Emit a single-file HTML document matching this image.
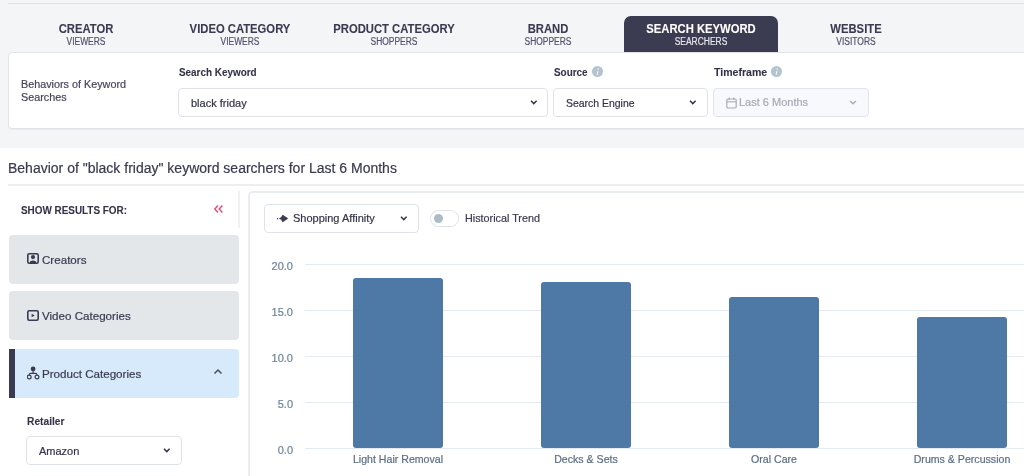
<!DOCTYPE html>
<html><head><meta charset="utf-8">
<style>
*{box-sizing:border-box;margin:0;padding:0}
html,body{width:1024px;height:476px;overflow:hidden;background:#f4f5f7;font-family:"Liberation Sans",sans-serif;color:#3a3a50;-webkit-text-stroke:0.2px currentColor}
.abs{position:absolute}
.topline{position:absolute;left:8px;top:3px;width:1016px;height:1px;background:#dfe2e6}
.tab{position:absolute;top:16px;width:154px;height:36px;text-align:center;color:#3a3a50}
.tab .t{-webkit-text-stroke:0.1px currentColor;position:absolute;left:0;right:0;top:6px;font-size:12.8px;font-weight:700;line-height:14px;white-space:nowrap;transform:scaleX(0.88)}
.tab .s{position:absolute;left:0;right:0;top:20px;font-size:10px;line-height:11px;color:#52526a;white-space:nowrap;transform:scaleX(0.845)}
.tab.active{background:#3b3b51;border-radius:7px 7px 0 0;color:#fff}
.tab.active .s{color:#e6e6ee}
.card{position:absolute;left:8px;top:52px;width:1030px;height:77px;background:#fff;border:1px solid #e1e5ea;border-radius:4px;box-shadow:0 1px 0 #e9ecf0}
.lbl{-webkit-text-stroke:0.1px currentColor;position:absolute;font-size:11px;font-weight:700;color:#33334a;white-space:nowrap}
.inp{position:absolute;height:29px;background:#fff;border:1px solid #dfe3e8;border-radius:4px;font-size:11px;color:#33334a}
.inp span{position:absolute;left:12px;top:8px;white-space:nowrap}
.chev{position:absolute;width:10px;height:7px}
.side{left:9px;width:230px;height:49px;background:#e3e7ea;border-radius:4px;font-size:11.6px;color:#3a3a50}
.side span{position:absolute;top:18px;white-space:nowrap}
.side.act{background:#d7eafc;border-left:6px solid #3a3a51;border-radius:0 4px 4px 0}
.side.act span{left:27px!important}
.side.act svg{margin-left:-6px}
.ylab{font-size:11px;line-height:14px;color:#6d8599;text-align:right}
.bar{width:90px;background:#4e78a6;border-radius:3px}
.xlab{font-size:10.6px;line-height:13px;color:#5b6e84;text-align:center;white-space:nowrap}
.main{position:absolute;left:0;top:148px;width:1024px;height:328px;background:#fff}
body{will-change:transform}</style></head>
<body>
<div class="topline"></div>

<div class="tab" style="left:8.5px"><div class="t">CREATOR</div><div class="s">VIEWERS</div></div>
<div class="tab" style="left:162.5px"><div class="t">VIDEO CATEGORY</div><div class="s">VIEWERS</div></div>
<div class="tab" style="left:316.5px"><div class="t">PRODUCT CATEGORY</div><div class="s">SHOPPERS</div></div>
<div class="tab" style="left:470.5px"><div class="t">BRAND</div><div class="s">SHOPPERS</div></div>
<div class="tab active" style="left:624px"><div class="t">SEARCH KEYWORD</div><div class="s">SEARCHERS</div></div>
<div class="tab" style="left:778.5px"><div class="t">WEBSITE</div><div class="s">VISITORS</div></div>

<div class="card">
  <div class="abs" style="left:12px;top:25px;font-size:10.8px;line-height:12.8px;color:#46465a;width:140px">Behaviors of Keyword<br>Searches</div>
  <div class="lbl" style="left:170px;top:13px;transform:scaleX(0.9);transform-origin:left">Search Keyword</div>
  <div class="inp" style="left:169px;top:35px;width:370px"><span>black friday</span>
    <svg class="chev" style="left:350px;top:10px" viewBox="0 0 10 7"><path d="M2 1.8 L4.8 4.6 L7.6 1.8" fill="none" stroke="#33334a" stroke-width="1.5"/></svg></div>
  <div class="lbl" style="left:545px;top:13px;transform:scaleX(0.9);transform-origin:left">Source</div>
  <svg class="abs" style="left:583px;top:13.2px" width="11" height="11" viewBox="0 0 11 11"><circle cx="5.5" cy="5.5" r="5.5" fill="#b5c3ce"/><path d="M5.85 5.4 L5.25 8.4" stroke="#f4f7f9" stroke-width="1.1" stroke-linecap="round"/><circle cx="6.2" cy="2.9" r="0.75" fill="#f4f7f9"/></svg>
  <div class="inp" style="left:544px;top:35px;width:155px"><span style="transform:scaleX(0.95);transform-origin:left">Search Engine</span>
    <svg class="chev" style="left:134px;top:10px" viewBox="0 0 10 7"><path d="M2 1.8 L4.8 4.6 L7.6 1.8" fill="none" stroke="#33334a" stroke-width="1.5"/></svg></div>
  <div class="lbl" style="left:705px;top:13px;transform:scaleX(0.96);transform-origin:left">Timeframe</div>
  <svg class="abs" style="left:762px;top:13.2px" width="11" height="11" viewBox="0 0 11 11"><circle cx="5.5" cy="5.5" r="5.5" fill="#b5c3ce"/><path d="M5.85 5.4 L5.25 8.4" stroke="#f4f7f9" stroke-width="1.1" stroke-linecap="round"/><circle cx="6.2" cy="2.9" r="0.75" fill="#f4f7f9"/></svg>
  <div class="inp" style="left:704px;top:35px;width:156px;background:#f7f9fc;border-color:#e0e5eb;color:#a6abb2">
    <svg class="abs" style="left:12px;top:7.5px" width="11" height="12" viewBox="0 0 11 12"><rect x="0.8" y="2" width="9.4" height="9" rx="1.2" fill="none" stroke="#a8adb4" stroke-width="1.2"/><line x1="0.8" y1="4.8" x2="10.2" y2="4.8" stroke="#a8adb4" stroke-width="1.1"/><line x1="3.2" y1="0.5" x2="3.2" y2="3" stroke="#a8adb4" stroke-width="1.2"/><line x1="7.8" y1="0.5" x2="7.8" y2="3" stroke="#a8adb4" stroke-width="1.2"/></svg>
    <span style="left:25px;top:7px">Last 6 Months</span>
    <svg class="chev" style="left:134px;top:10px" viewBox="0 0 10 7"><path d="M2 2 L5 4.8 L8 2" fill="none" stroke="#a8adb4" stroke-width="1.3"/></svg></div>
</div>

<div class="main">
  <div class="abs" style="left:8px;top:12px;font-size:14px;line-height:16px;color:#3a3a50;white-space:nowrap">Behavior of "black friday" keyword searchers for Last 6 Months</div>
  <div class="abs" style="left:8px;top:36px;width:1016px;height:2px;background:#eceef0"></div>
  <!-- sidebar -->
  <div class="lbl" style="left:21px;top:56px;transform:scaleX(0.9);transform-origin:left;color:#33334a">SHOW RESULTS FOR:</div>
  <svg class="abs" style="left:213px;top:56px" width="11" height="10" viewBox="0 0 11 10"><path d="M5 1.6 L1.8 5 L5 8.4 M9.4 1.6 L6.2 5 L9.4 8.4" fill="none" stroke="#e84a7c" stroke-width="1.4"/></svg>
  <div class="abs" style="left:238px;top:43px;width:2px;height:37px;background:#eef0f2"></div>
  <div class="abs side" style="top:87px"><svg class="abs" style="left:18px;top:18px" width="12" height="11" viewBox="0 0 12 11"><rect x="0.8" y="0.8" width="10.4" height="9.4" rx="1.4" fill="none" stroke="#3a3a50" stroke-width="1.6"/><circle cx="6" cy="4.1" r="2.1" fill="#3a3a50"/><path d="M2.6 10.2 L3.2 8.3 Q6 6.6 8.8 8.3 L9.4 10.2 Z" fill="#3a3a50"/></svg><span style="left:33px">Creators</span></div>
  <div class="abs side" style="top:143px"><svg class="abs" style="left:18px;top:18.5px" width="12" height="11" viewBox="0 0 12 11"><rect x="0.8" y="0.8" width="10.4" height="9.4" rx="1.4" fill="none" stroke="#3a3a50" stroke-width="1.6"/><path d="M4.6 3.7 L7.7 5.5 L4.6 7.3Z" fill="#3a3a50"/></svg><span style="left:33px">Video Categories</span></div>
  <div class="abs side act" style="top:200.5px"><svg class="abs" style="left:17.5px;top:17px" width="14" height="14" viewBox="0 0 14 14"><circle cx="6.1" cy="2.9" r="2.4" fill="#3a3a50"/><path d="M6.1 5 V7.2 M2.2 9.2 Q2.2 7.4 3.8 7.4 H8.4 Q10 7.4 10 9.2" stroke="#3a3a50" stroke-width="1.1" fill="none"/><circle cx="2.2" cy="11" r="1.9" fill="none" stroke="#3a3a50" stroke-width="1.2"/><circle cx="10" cy="11" r="1.9" fill="none" stroke="#3a3a50" stroke-width="1.2"/></svg><span style="left:33px">Product Categories</span>
    <svg class="abs" style="left:204px;top:19.2px" width="10" height="7" viewBox="0 0 10 7"><path d="M1.5 5.5 L5 2 L8.5 5.5" fill="none" stroke="#4b4e5c" stroke-width="1.5"/></svg></div>
  <div class="lbl" style="left:27px;top:266.5px;transform:scaleX(0.93);transform-origin:left">Retailer</div>
  <div class="inp" style="left:26px;top:288px;width:156px;height:29px"><span>Amazon</span>
    <svg class="chev" style="left:135px;top:10px" viewBox="0 0 10 7"><path d="M2 1.8 L4.8 4.6 L7.6 1.8" fill="none" stroke="#33334a" stroke-width="1.5"/></svg></div>
  <!-- chart card -->
  <div class="abs" style="left:248px;top:43px;width:800px;height:300px;border:2px solid #e9edf0;border-radius:5px;background:#fff">
    <div class="inp" style="left:14px;top:11px;width:155px;height:29px">
      <svg class="abs" style="left:11px;top:9px" width="13" height="9" viewBox="0 0 13 9"><circle cx="1.5" cy="4.8" r="0.7" fill="#3a3a50"/><path d="M3.4 4.6 Q5.6 4.3 6.7 1.1 L11.8 4.5 L6.7 7.9 Q5.6 4.9 3.4 4.6 Z" fill="#3a3a50" stroke="#3a3a50" stroke-width="0.6" stroke-linejoin="round"/></svg>
      <span style="left:28px;top:7px">Shopping Affinity</span>
      <svg class="chev" style="left:134px;top:10px" viewBox="0 0 10 7"><path d="M2 1.8 L4.8 4.6 L7.6 1.8" fill="none" stroke="#33334a" stroke-width="1.5"/></svg></div>
    <div class="abs" style="left:180px;top:17px;width:29px;height:17px;border:1px solid #dfe3e8;border-radius:8.5px;background:#fff"><div class="abs" style="left:3px;top:3px;width:9px;height:9px;border-radius:50%;background:#adbbc6"></div></div>
    <div class="abs" style="left:215px;top:19px;font-size:11px;color:#3a3a50;white-space:nowrap;transform:scaleX(0.98);transform-origin:left">Historical Trend</div>
  </div>
</div>
<div id="chart">
<div class="abs" style="left:305px;top:264px;width:719px;height:1px;background:#e5eaf0"></div>
<div class="abs ylab" style="left:253px;top:258.5px;width:40px">20.0</div>
<div class="abs" style="left:305px;top:310px;width:719px;height:1px;background:#e5eaf0"></div>
<div class="abs ylab" style="left:253px;top:304.5px;width:40px">15.0</div>
<div class="abs" style="left:305px;top:356px;width:719px;height:1px;background:#e5eaf0"></div>
<div class="abs ylab" style="left:253px;top:350.5px;width:40px">10.0</div>
<div class="abs" style="left:305px;top:402px;width:719px;height:1px;background:#e5eaf0"></div>
<div class="abs ylab" style="left:253px;top:396.5px;width:40px">5.0</div>
<div class="abs" style="left:305px;top:448px;width:719px;height:1px;background:#e5eaf0"></div>
<div class="abs ylab" style="left:253px;top:442.5px;width:40px">0.0</div>
<div class="abs bar" style="left:353px;top:277.5px;height:170.5px"></div>
<div class="abs xlab" style="left:323px;top:453px;width:150px">Light Hair Removal</div>
<div class="abs bar" style="left:541px;top:281.5px;height:166.5px"></div>
<div class="abs xlab" style="left:511px;top:453px;width:150px">Decks &amp; Sets</div>
<div class="abs bar" style="left:729px;top:297px;height:151px"></div>
<div class="abs xlab" style="left:699px;top:453px;width:150px">Oral Care</div>
<div class="abs bar" style="left:917px;top:317px;height:131px"></div>
<div class="abs xlab" style="left:887px;top:453px;width:150px">Drums &amp; Percussion</div>
</div>
</body></html>
